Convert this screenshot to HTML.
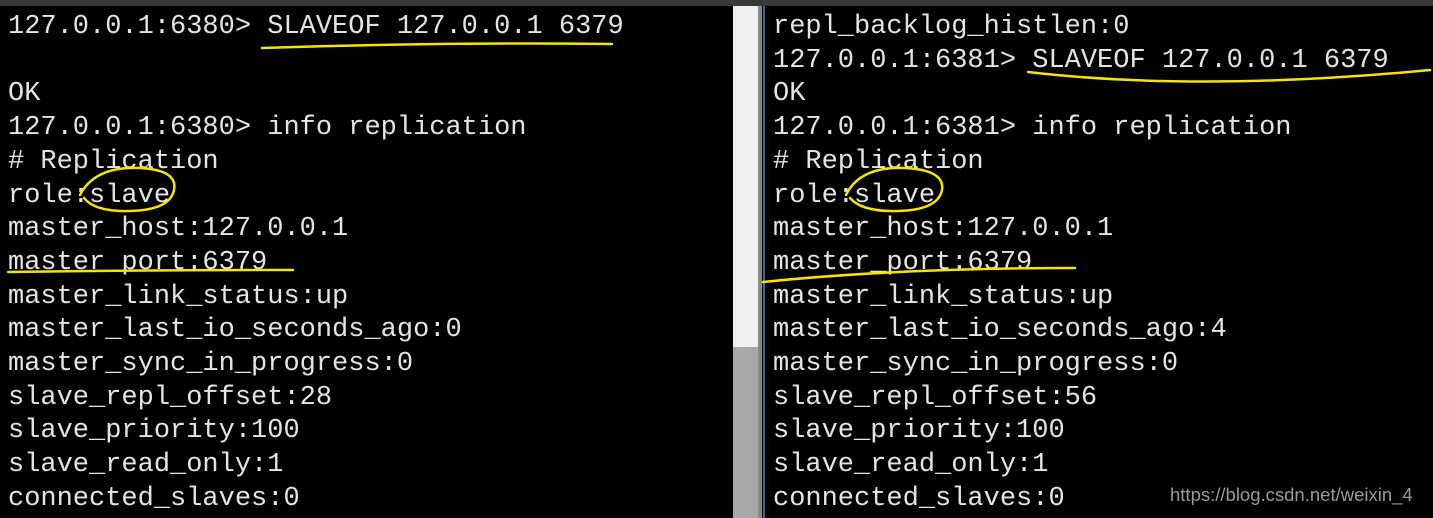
<!DOCTYPE html>
<html><head><meta charset="utf-8"><style>
html,body{margin:0;padding:0;width:1433px;height:518px;overflow:hidden;background:#000;}
.top{position:absolute;left:0;top:0;width:1433px;height:6px;background:#3a3a3a;}
.pane{position:absolute;top:11px;font-family:"Liberation Mono","DejaVu Sans Mono",monospace;font-size:27px;line-height:33.7px;color:#e4e4e4;white-space:pre;}
.sb{position:absolute;left:733px;top:6px;width:25px;height:512px;background:#f0f0f0;}
.thumb{position:absolute;left:733px;top:347px;width:25px;height:171px;background:#a8a8a8;}
.sep{position:absolute;left:758px;top:6px;width:4px;height:512px;background:#8a8a8a;}
.blue{position:absolute;left:763px;top:6px;width:2px;height:512px;background:#2a6fa8;}
.wm{position:absolute;left:1170px;top:484px;font-family:"Liberation Sans",sans-serif;font-size:18.5px;color:#9a9a9a;white-space:nowrap;}
svg{position:absolute;left:0;top:0;}
</style></head><body>
<div class="top"></div>
<div class="pane" style="left:8px">127.0.0.1:6380&gt; SLAVEOF 127.0.0.1 6379

OK
127.0.0.1:6380&gt; info replication
# Replication
role:slave
master_host:127.0.0.1
master_port:6379
master_link_status:up
master_last_io_seconds_ago:0
master_sync_in_progress:0
slave_repl_offset:28
slave_priority:100
slave_read_only:1
connected_slaves:0</div>
<div class="sb"></div><div class="thumb"></div><div class="sep"></div><div class="blue"></div>
<div class="pane" style="left:773px">repl_backlog_histlen:0
127.0.0.1:6381&gt; SLAVEOF 127.0.0.1 6379
OK
127.0.0.1:6381&gt; info replication
# Replication
role:slave
master_host:127.0.0.1
master_port:6379
master_link_status:up
master_last_io_seconds_ago:4
master_sync_in_progress:0
slave_repl_offset:56
slave_priority:100
slave_read_only:1
connected_slaves:0</div>
<div class="wm">https://blog.csdn.net/weixin_4</div>
<svg width="1433" height="518" fill="none" stroke="#f5e400" stroke-width="2.5" stroke-linecap="round">
<path d="M262 48 Q440 42 612 44"/>
<path d="M80 195 Q95 166 140 168 Q178 170 174 190 Q170 210 130 211 Q95 212 84 198"/>
<path d="M8 272 Q150 270 293 270"/>
<path d="M1028 72 Q1200 92 1430 70"/>
<path d="M846 195 Q860 166 905 168 Q945 170 942 190 Q938 210 898 211 Q862 212 850 198"/>
<path d="M763 282 Q900 268 1075 268"/>
</svg>
</body></html>
